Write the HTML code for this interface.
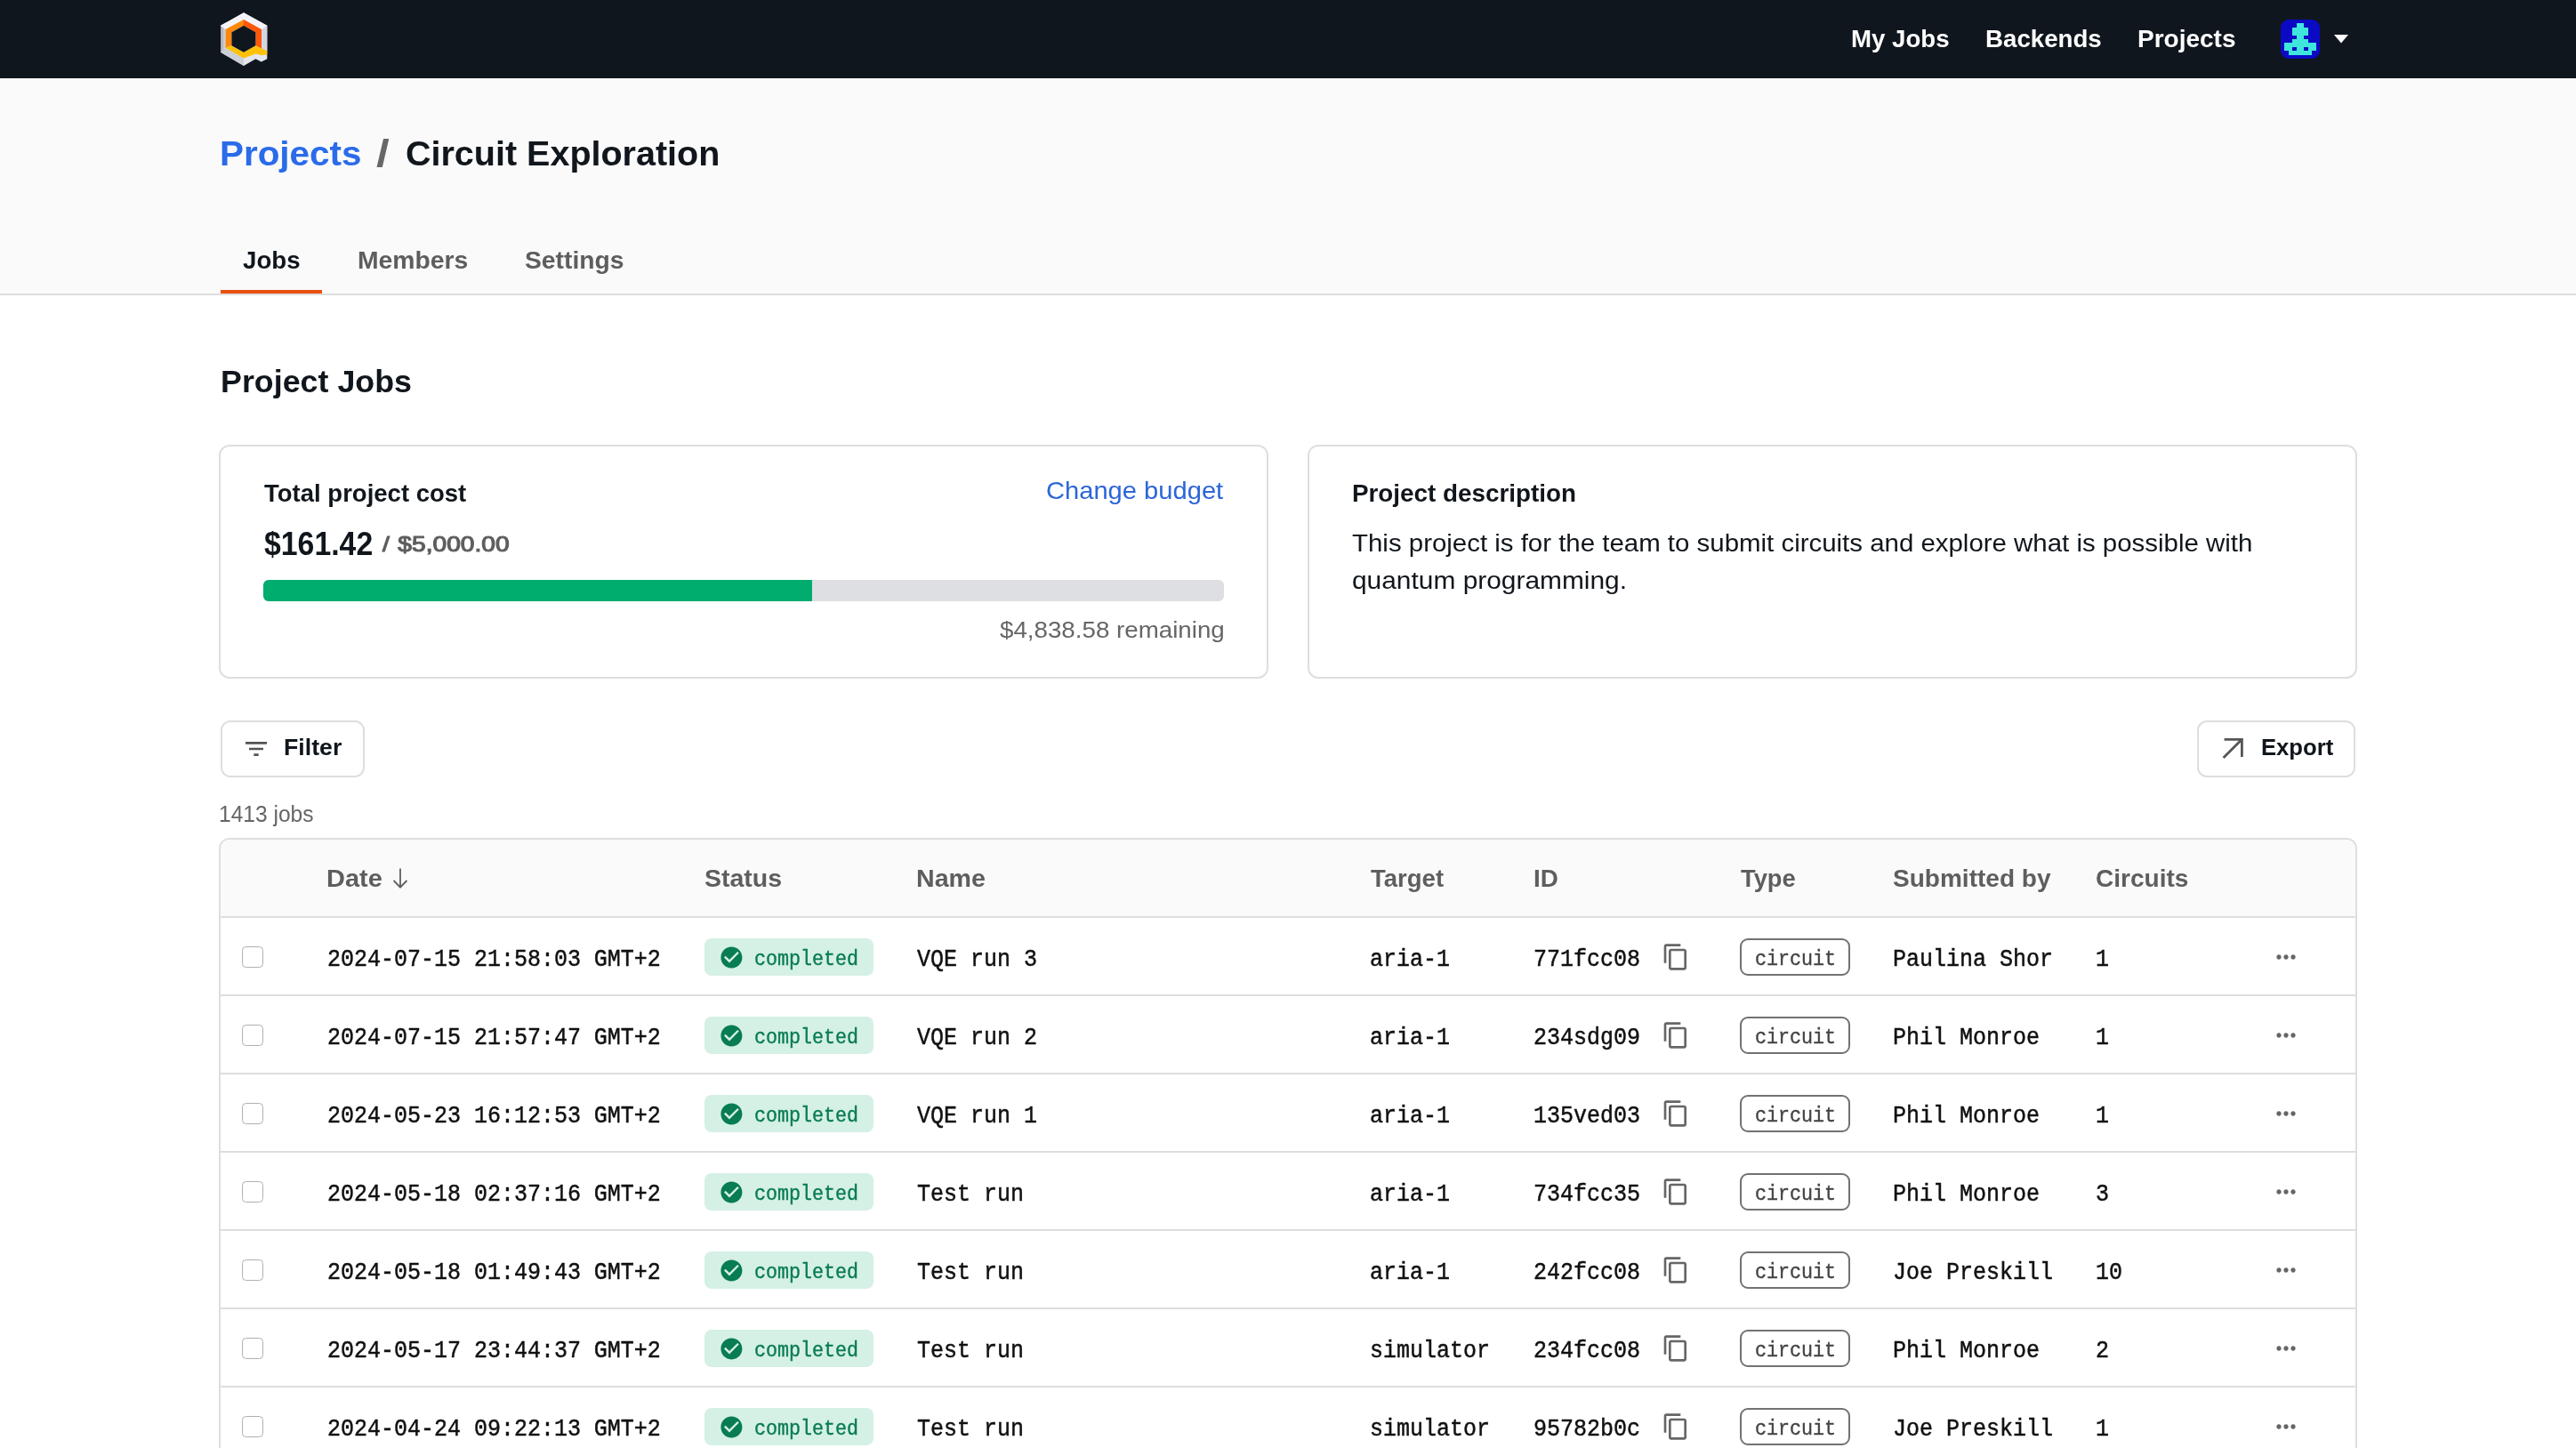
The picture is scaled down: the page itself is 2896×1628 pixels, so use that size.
<!DOCTYPE html>
<html lang="en">
<head>
<meta charset="utf-8">
<title>Circuit Exploration - Project Jobs</title>
<style>
*{box-sizing:border-box;margin:0;padding:0}
html,body{width:2896px;height:1628px;overflow:hidden;background:#fff}
body{font-family:"Liberation Sans",sans-serif;color:#10161c;position:relative;will-change:transform}
.t{position:absolute;white-space:pre;line-height:1;transform-origin:0 0}
.b{font-weight:bold}
.m{font-family:"Liberation Mono",monospace}
svg{position:absolute;display:block;overflow:visible}

/* top navigation */
.nav{position:absolute;left:0;top:0;width:2896px;height:88px;background:#10161d}
.nav .t{color:#fff;font-weight:bold}
.avatar{position:absolute;left:2564px;top:22px;width:44px;height:44px;border-radius:9px;background:#0a0ac4;overflow:hidden}

/* sub header */
.sub{position:absolute;left:0;top:88px;width:2896px;height:244px;background:#fafafa;border-bottom:2px solid #dedede}
.title{font-weight:bold}
.tab{font-weight:bold;color:#5e5e5e}
.tabline{position:absolute;left:248px;top:238px;width:114px;height:4px;background:#e8500f}

/* main */
.card{position:absolute;top:500px;width:1180px;height:263px;border:2px solid #dedede;border-radius:12px;background:#fff}
.card .t{position:absolute}
.bar{position:absolute;left:48px;top:150px;width:1080px;height:24px;border-radius:6px;background:#dedfe2;overflow:hidden}
.bar i{display:block;width:617px;height:24px;background:#00ac6e}

.btn{position:absolute;top:810px;height:64px;border:2px solid #dedede;border-radius:11px;background:#fff}
.btn .t{font-weight:bold}

/* table */
.table{position:absolute;left:246px;top:942px;width:2404px;height:686px;border:2px solid #dedede;border-bottom:0;border-radius:12px 12px 0 0;overflow:hidden;background:#fff}
.thead{position:relative;height:88px;background:#fafafa;border-bottom:2px solid #dedede}
.thead .t{font-weight:bold;color:#5e5e5e}
.row{position:relative;height:88px;border-bottom:2px solid #dedede}
.row .t{font-family:"Liberation Mono",monospace;font-size:28.2px;transform:scaleX(.8864);top:32.7px;color:#111;-webkit-text-stroke:.5px #111}
.cb{position:absolute;left:24px;top:32px;width:24px;height:24px;border:1.5px solid #b0b0b0;border-radius:4.5px;background:#fff}
.ok{position:absolute;left:544px;top:23px;width:190px;height:42px;border-radius:8px;background:#d5f0e5}
.ok svg{left:15.6px;top:6.6px;fill:#087c52}
.ok .t,.ty .t{font-size:24px;transform:scaleX(.9028);top:11.5px}
.ok .t{left:56px;color:#087c52;-webkit-text-stroke:.4px #087c52}
.ty{position:absolute;left:1708px;top:23px;width:124px;height:42px;border:2px solid #727272;border-radius:9px}
.ty .t{left:15px;top:9.5px;color:#444;-webkit-text-stroke:.4px #444}
.row .d{left:120px}.row .n{left:783px}.row .g{left:1292px}.row .i{left:1476.3px}.row .s{left:1879.5px}.row .c{left:2108px}
.cp{left:1620px;top:28px;fill:#666}
.mr{left:2306px;top:28px;fill:#666}
#n1{left:2081px;top:28.7px;font-size:28.5px;transform:scaleX(0.9701)}
#n2{left:2231.8px;top:28.7px;font-size:28.5px;transform:scaleX(0.9711)}
#n3{left:2403px;top:28.7px;font-size:28.5px;transform:scaleX(0.9827)}
#t1{left:246.6px;top:64.6px;font-size:39.5px;color:#2a6bea;transform:scaleX(1.023)}
#t2{left:423.2px;top:64.2px;font-size:42.5px;color:#686868;transform:scaleX(1.25)}
#t3{left:456px;top:64.6px;font-size:39.5px}
#tb1{left:272.6px;top:190.8px;font-size:27.5px;color:#10161c;transform:scaleX(1.007)}
#tb2{left:402px;top:190.8px;font-size:27.5px;transform:scaleX(1.029)}
#tb3{left:590.2px;top:190.8px;font-size:27.5px;transform:scaleX(1.028)}
#c1a{left:49px;top:39.7px;font-size:27px;transform:scaleX(1.019)}
#c1b{left:928px;top:35.8px;font-size:27.5px;color:#2c66d8;transform:scaleX(1.059)}
#c1c{left:48.5px;top:91.6px;font-size:36.4px;transform:scaleX(0.9292)}
#c1d{left:182.2px;top:98.4px;font-size:24.5px;color:#5e5e5e;transform:scaleX(1.149)}
#c1e{left:876px;top:193.2px;font-size:26.5px;color:#666;transform:scaleX(1.046)}
#c2a{left:48.4px;top:39.7px;font-size:27px;transform:scaleX(1.03)}
#c2b{left:48.2px;top:94.7px;font-size:27.5px;transform:scaleX(1.07)}
#c2c{left:48.2px;top:136.7px;font-size:27.5px;transform:scaleX(1.087)}
#bf{left:69.2px;top:15.6px;font-size:25px;transform:scaleX(1.068)}
#be{left:70px;top:15.6px;font-size:25px;transform:scaleX(1.026)}
#cnt{left:246.2px;top:902.6px;font-size:25px;color:#666;transform:scaleX(0.983)}
#h_date{left:119.2px;top:30.6px;font-size:27px;transform:scaleX(1.072)}
#h_status{left:544px;top:30.6px;font-size:27px;transform:scaleX(1.056)}
#h_name{left:781.8px;top:30.6px;font-size:27px;transform:scaleX(1.06)}
#h_target{left:1293.2px;top:30.6px;font-size:27px;transform:scaleX(1.019)}
#h_id{left:1475.8px;top:30.6px;font-size:27px;transform:scaleX(1.032)}
#h_type{left:1709px;top:30.6px;font-size:27px;transform:scaleX(1.011)}
#h_sub{left:1879.8px;top:30.6px;font-size:27px;transform:scaleX(1.038)}
#h_circ{left:2108px;top:30.6px;font-size:27px;transform:scaleX(1.038)}
#h2{left:247.6px;top:411.8px;font-size:35.6px;transform:scaleX(1.007)}
</style>
</head>
<body>

<div class="nav">
  <svg id="logo" style="left:248px;top:14px" width="53" height="61" viewBox="248 14 53 61">
    <defs><linearGradient id="lg" x1="0" y1="0" x2="1" y2="0"><stop offset="0" stop-color="#a4a6b0"/><stop offset="1" stop-color="#d9dbe3"/></linearGradient></defs>
    <polygon points="274,14.2 300.3,28.8 300.3,66.3 293.8,69.6 287.4,66.3 274,73.9 248,58.8 248,28.8" fill="#e4e6ed"/>
    <polygon points="248,28.8 253.6,33 253.6,53.7 274,65.4 274,73.9 248,58.8" fill="#cdcfd8"/>
    <polygon points="248,28.8 253.8,32.4 253.8,54.4 248,58.8" fill="url(#lg)"/>
    <polygon points="300.3,28.8 294,33 294,55 300.3,57.3" fill="#d3d6e1"/>
    <polygon points="274,14.2 300.3,28.8 294,33 274,22 253.6,33 248,28.8" fill="#f4f4f8"/>
    <polygon points="274,22 294,33 294,55 287.4,51.3 287.4,36.3 274,28.8" fill="#ff5708"/>
    <polygon points="274,22 274,28.8 260.4,36.3 260.4,51.3 253.6,53.9 253.6,33" fill="#ff880a"/>
    <polygon points="253.6,53.7 260.4,51.3 274,58.8 287.4,51.3 300.3,57.3 300.3,61.6 293.8,62 287.4,60.4 274,65.6" fill="#ffc107"/>
    <polygon points="274,28.8 287.4,36.3 287.4,51.3 274,58.8 260.4,51.3 260.4,36.3" fill="#10161d"/>
  </svg>
  <span class="t" id="n1">My Jobs</span>
  <span class="t" id="n2">Backends</span>
  <span class="t" id="n3">Projects</span>
  <div class="avatar">
    <svg style="left:0;top:0" width="44" height="44" viewBox="0 0 10 10" shape-rendering="crispEdges">
      <path fill="#3fe6dc" d="M4 1h2v1h1v2h-1v1h1v1h2v2h-1v1h-6v-1h-1v-2h2v-1h1v-1h-1v-2h1z"/>
      <path fill="#0a0ac4" d="M3 7h1v1h-1zM6 7h1v1h-1z"/>
    </svg>
  </div>
  <svg style="left:2624px;top:39px" width="16" height="10" viewBox="0 0 16 10"><path d="M0 0h16l-8 9.5z" fill="#fff"/></svg>
</div>

<div class="sub">
  <span class="t title" id="t1">Projects</span>
  <span class="t title" id="t2">/</span>
  <span class="t title" id="t3">Circuit Exploration</span>
  <span class="t tab" id="tb1">Jobs</span>
  <span class="t tab" id="tb2">Members</span>
  <span class="t tab" id="tb3">Settings</span>
  <div class="tabline"></div>
</div>

<span class="t b" id="h2">Project Jobs</span>

<div class="card" style="left:246px">
  <span class="t b" id="c1a">Total project cost</span>
  <span class="t" id="c1b">Change budget</span>
  <span class="t b" id="c1c">$161.42</span>
  <span class="t" id="c1d" style="-webkit-text-stroke:1.1px #5e5e5e;word-spacing:1.5px">/ $5,000.00</span>
  <div class="bar"><i></i></div>
  <span class="t" id="c1e">$4,838.58 remaining</span>
</div>

<div class="card" style="left:1470px">
  <span class="t b" id="c2a">Project description</span>
  <span class="t" id="c2b">This project is for the team to submit circuits and explore what is possible with</span>
  <span class="t" id="c2c">quantum programming.</span>
</div>

<div class="btn" style="left:248px;width:162px">
  <svg class="ic" style="left:22px;top:14px" width="32" height="32" viewBox="0 0 24 24"><path fill="#555" d="M10 18h4v-2h-4v2zM3 6v2h18V6H3zm3 7h12v-2H6v2z"/></svg>
  <span class="t" id="bf">Filter</span>
</div>
<div class="btn" style="left:2470px;width:178px">
  <svg style="left:24.7px;top:15.4px" width="28" height="28" viewBox="0 0 28 28"><path d="M3.6 4.3H23.4V24M23.2 4.5L2.6 25" fill="none" stroke="#555" stroke-width="2.8"/></svg>
  <span class="t" id="be">Export</span>
</div>

<span class="t" id="cnt">1413 jobs</span>

<div class="table" id="table">
  <div class="thead">
    <span class="t" id="h_date">Date</span>
    <svg style="left:194px;top:32px" width="16" height="24" viewBox="0 0 16 24"><path d="M8 .6V21.2M.6 14l7.4 7.6 7.4-7.6" fill="none" stroke="#5e5e5e" stroke-width="1.8"/></svg>
    <span class="t" id="h_status">Status</span>
    <span class="t" id="h_name">Name</span>
    <span class="t" id="h_target">Target</span>
    <span class="t" id="h_id">ID</span>
    <span class="t" id="h_type">Type</span>
    <span class="t" id="h_sub">Submitted by</span>
    <span class="t" id="h_circ">Circuits</span>
  </div>
  <div class="row">
    <div class="cb"></div>
    <span class="t d" id="r0d">2024-07-15 21:58:03 GMT+2</span>
    <div class="ok"><svg width="28.8" height="28.8" viewBox="0 0 24 24"><path d="M12 2C6.48 2 2 6.48 2 12s4.48 10 10 10 10-4.48 10-10S17.52 2 12 2zm-2 15l-5-5 1.41-1.41L10 14.17l7.59-7.59L19 8l-9 9z"/></svg><span class="t" id="r0ok">completed</span></div>
    <span class="t n" id="r0n">VQE run 3</span>
    <span class="t g" id="r0g">aria-1</span>
    <span class="t i" id="r0i">771fcc08</span>
    <svg class="cp" width="32" height="32" viewBox="0 0 24 24"><path d="M16 1H4c-1.1 0-2 .9-2 2v14h2V3h12V1zm3 4H8c-1.1 0-2 .9-2 2v14c0 1.1.9 2 2 2h11c1.1 0 2-.9 2-2V7c0-1.1-.9-2-2-2zm0 16H8V7h11v14z"/></svg>
    <div class="ty"><span class="t" id="r0ty">circuit</span></div>
    <span class="t s" id="r0s">Paulina Shor</span>
    <span class="t c" id="r0c">1</span>
    <svg class="mr" width="32" height="32" viewBox="0 0 24 24"><path d="M6 10c-1.1 0-2 .9-2 2s.9 2 2 2 2-.9 2-2-.9-2-2-2zm12 0c-1.1 0-2 .9-2 2s.9 2 2 2 2-.9 2-2-.9-2-2-2zm-6 0c-1.1 0-2 .9-2 2s.9 2 2 2 2-.9 2-2-.9-2-2-2z"/></svg>
  </div>
  <div class="row">
    <div class="cb"></div>
    <span class="t d">2024-07-15 21:57:47 GMT+2</span>
    <div class="ok"><svg width="28.8" height="28.8" viewBox="0 0 24 24"><path d="M12 2C6.48 2 2 6.48 2 12s4.48 10 10 10 10-4.48 10-10S17.52 2 12 2zm-2 15l-5-5 1.41-1.41L10 14.17l7.59-7.59L19 8l-9 9z"/></svg><span class="t">completed</span></div>
    <span class="t n">VQE run 2</span>
    <span class="t g">aria-1</span>
    <span class="t i">234sdg09</span>
    <svg class="cp" width="32" height="32" viewBox="0 0 24 24"><path d="M16 1H4c-1.1 0-2 .9-2 2v14h2V3h12V1zm3 4H8c-1.1 0-2 .9-2 2v14c0 1.1.9 2 2 2h11c1.1 0 2-.9 2-2V7c0-1.1-.9-2-2-2zm0 16H8V7h11v14z"/></svg>
    <div class="ty"><span class="t">circuit</span></div>
    <span class="t s">Phil Monroe</span>
    <span class="t c">1</span>
    <svg class="mr" width="32" height="32" viewBox="0 0 24 24"><path d="M6 10c-1.1 0-2 .9-2 2s.9 2 2 2 2-.9 2-2-.9-2-2-2zm12 0c-1.1 0-2 .9-2 2s.9 2 2 2 2-.9 2-2-.9-2-2-2zm-6 0c-1.1 0-2 .9-2 2s.9 2 2 2 2-.9 2-2-.9-2-2-2z"/></svg>
  </div>
  <div class="row">
    <div class="cb"></div>
    <span class="t d">2024-05-23 16:12:53 GMT+2</span>
    <div class="ok"><svg width="28.8" height="28.8" viewBox="0 0 24 24"><path d="M12 2C6.48 2 2 6.48 2 12s4.48 10 10 10 10-4.48 10-10S17.52 2 12 2zm-2 15l-5-5 1.41-1.41L10 14.17l7.59-7.59L19 8l-9 9z"/></svg><span class="t">completed</span></div>
    <span class="t n">VQE run 1</span>
    <span class="t g">aria-1</span>
    <span class="t i">135ved03</span>
    <svg class="cp" width="32" height="32" viewBox="0 0 24 24"><path d="M16 1H4c-1.1 0-2 .9-2 2v14h2V3h12V1zm3 4H8c-1.1 0-2 .9-2 2v14c0 1.1.9 2 2 2h11c1.1 0 2-.9 2-2V7c0-1.1-.9-2-2-2zm0 16H8V7h11v14z"/></svg>
    <div class="ty"><span class="t">circuit</span></div>
    <span class="t s">Phil Monroe</span>
    <span class="t c">1</span>
    <svg class="mr" width="32" height="32" viewBox="0 0 24 24"><path d="M6 10c-1.1 0-2 .9-2 2s.9 2 2 2 2-.9 2-2-.9-2-2-2zm12 0c-1.1 0-2 .9-2 2s.9 2 2 2 2-.9 2-2-.9-2-2-2zm-6 0c-1.1 0-2 .9-2 2s.9 2 2 2 2-.9 2-2-.9-2-2-2z"/></svg>
  </div>
  <div class="row">
    <div class="cb"></div>
    <span class="t d">2024-05-18 02:37:16 GMT+2</span>
    <div class="ok"><svg width="28.8" height="28.8" viewBox="0 0 24 24"><path d="M12 2C6.48 2 2 6.48 2 12s4.48 10 10 10 10-4.48 10-10S17.52 2 12 2zm-2 15l-5-5 1.41-1.41L10 14.17l7.59-7.59L19 8l-9 9z"/></svg><span class="t">completed</span></div>
    <span class="t n">Test run</span>
    <span class="t g">aria-1</span>
    <span class="t i">734fcc35</span>
    <svg class="cp" width="32" height="32" viewBox="0 0 24 24"><path d="M16 1H4c-1.1 0-2 .9-2 2v14h2V3h12V1zm3 4H8c-1.1 0-2 .9-2 2v14c0 1.1.9 2 2 2h11c1.1 0 2-.9 2-2V7c0-1.1-.9-2-2-2zm0 16H8V7h11v14z"/></svg>
    <div class="ty"><span class="t">circuit</span></div>
    <span class="t s">Phil Monroe</span>
    <span class="t c">3</span>
    <svg class="mr" width="32" height="32" viewBox="0 0 24 24"><path d="M6 10c-1.1 0-2 .9-2 2s.9 2 2 2 2-.9 2-2-.9-2-2-2zm12 0c-1.1 0-2 .9-2 2s.9 2 2 2 2-.9 2-2-.9-2-2-2zm-6 0c-1.1 0-2 .9-2 2s.9 2 2 2 2-.9 2-2-.9-2-2-2z"/></svg>
  </div>
  <div class="row">
    <div class="cb"></div>
    <span class="t d" id="r4d">2024-05-18 01:49:43 GMT+2</span>
    <div class="ok"><svg width="28.8" height="28.8" viewBox="0 0 24 24"><path d="M12 2C6.48 2 2 6.48 2 12s4.48 10 10 10 10-4.48 10-10S17.52 2 12 2zm-2 15l-5-5 1.41-1.41L10 14.17l7.59-7.59L19 8l-9 9z"/></svg><span class="t" id="r4ok">completed</span></div>
    <span class="t n" id="r4n">Test run</span>
    <span class="t g" id="r4g">aria-1</span>
    <span class="t i" id="r4i">242fcc08</span>
    <svg class="cp" width="32" height="32" viewBox="0 0 24 24"><path d="M16 1H4c-1.1 0-2 .9-2 2v14h2V3h12V1zm3 4H8c-1.1 0-2 .9-2 2v14c0 1.1.9 2 2 2h11c1.1 0 2-.9 2-2V7c0-1.1-.9-2-2-2zm0 16H8V7h11v14z"/></svg>
    <div class="ty"><span class="t" id="r4ty">circuit</span></div>
    <span class="t s" id="r4s">Joe Preskill</span>
    <span class="t c" id="r4c">10</span>
    <svg class="mr" width="32" height="32" viewBox="0 0 24 24"><path d="M6 10c-1.1 0-2 .9-2 2s.9 2 2 2 2-.9 2-2-.9-2-2-2zm12 0c-1.1 0-2 .9-2 2s.9 2 2 2 2-.9 2-2-.9-2-2-2zm-6 0c-1.1 0-2 .9-2 2s.9 2 2 2 2-.9 2-2-.9-2-2-2z"/></svg>
  </div>
  <div class="row">
    <div class="cb"></div>
    <span class="t d">2024-05-17 23:44:37 GMT+2</span>
    <div class="ok"><svg width="28.8" height="28.8" viewBox="0 0 24 24"><path d="M12 2C6.48 2 2 6.48 2 12s4.48 10 10 10 10-4.48 10-10S17.52 2 12 2zm-2 15l-5-5 1.41-1.41L10 14.17l7.59-7.59L19 8l-9 9z"/></svg><span class="t">completed</span></div>
    <span class="t n">Test run</span>
    <span class="t g">simulator</span>
    <span class="t i">234fcc08</span>
    <svg class="cp" width="32" height="32" viewBox="0 0 24 24"><path d="M16 1H4c-1.1 0-2 .9-2 2v14h2V3h12V1zm3 4H8c-1.1 0-2 .9-2 2v14c0 1.1.9 2 2 2h11c1.1 0 2-.9 2-2V7c0-1.1-.9-2-2-2zm0 16H8V7h11v14z"/></svg>
    <div class="ty"><span class="t">circuit</span></div>
    <span class="t s">Phil Monroe</span>
    <span class="t c">2</span>
    <svg class="mr" width="32" height="32" viewBox="0 0 24 24"><path d="M6 10c-1.1 0-2 .9-2 2s.9 2 2 2 2-.9 2-2-.9-2-2-2zm12 0c-1.1 0-2 .9-2 2s.9 2 2 2 2-.9 2-2-.9-2-2-2zm-6 0c-1.1 0-2 .9-2 2s.9 2 2 2 2-.9 2-2-.9-2-2-2z"/></svg>
  </div>
  <div class="row">
    <div class="cb"></div>
    <span class="t d">2024-04-24 09:22:13 GMT+2</span>
    <div class="ok"><svg width="28.8" height="28.8" viewBox="0 0 24 24"><path d="M12 2C6.48 2 2 6.48 2 12s4.48 10 10 10 10-4.48 10-10S17.52 2 12 2zm-2 15l-5-5 1.41-1.41L10 14.17l7.59-7.59L19 8l-9 9z"/></svg><span class="t">completed</span></div>
    <span class="t n">Test run</span>
    <span class="t g">simulator</span>
    <span class="t i">95782b0c</span>
    <svg class="cp" width="32" height="32" viewBox="0 0 24 24"><path d="M16 1H4c-1.1 0-2 .9-2 2v14h2V3h12V1zm3 4H8c-1.1 0-2 .9-2 2v14c0 1.1.9 2 2 2h11c1.1 0 2-.9 2-2V7c0-1.1-.9-2-2-2zm0 16H8V7h11v14z"/></svg>
    <div class="ty"><span class="t">circuit</span></div>
    <span class="t s">Joe Preskill</span>
    <span class="t c">1</span>
    <svg class="mr" width="32" height="32" viewBox="0 0 24 24"><path d="M6 10c-1.1 0-2 .9-2 2s.9 2 2 2 2-.9 2-2-.9-2-2-2zm12 0c-1.1 0-2 .9-2 2s.9 2 2 2 2-.9 2-2-.9-2-2-2zm-6 0c-1.1 0-2 .9-2 2s.9 2 2 2 2-.9 2-2-.9-2-2-2z"/></svg>
  </div>
</div>

</body>
</html>
